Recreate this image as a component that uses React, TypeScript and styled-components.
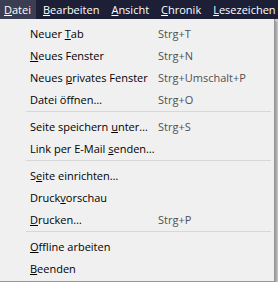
import styled, { createGlobalStyle } from 'styled-components'

const GlobalStyle = createGlobalStyle`
  html, body {
    margin: 0;
    padding: 0;
    background: #d8d8d8;
  }
  body {
    font-family: 'Open Sans', 'Noto Sans', sans-serif;
  }
`

type Entry =
  | { kind: 'item'; label: string; key: number; shortcut?: string }
  | { kind: 'sep' }

const topItems = [
  { label: 'Datei', active: true },
  { label: 'Bearbeiten' },
  { label: 'Ansicht' },
  { label: 'Chronik' },
  { label: 'Lesezeichen' },
]

// key = index of the underlined access letter
const entries: Entry[] = [
  { kind: 'item', label: 'Neuer Tab', key: 6, shortcut: 'Strg+T' },
  { kind: 'item', label: 'Neues Fenster', key: 0, shortcut: 'Strg+N' },
  { kind: 'item', label: 'Neues privates Fenster', key: 6, shortcut: 'Strg+Umschalt+P' },
  { kind: 'item', label: 'Datei öffnen…', key: 8, shortcut: 'Strg+O' },
  { kind: 'sep' },
  { kind: 'item', label: 'Seite speichern unter…', key: 16, shortcut: 'Strg+S' },
  { kind: 'item', label: 'Link per E-Mail senden…', key: 16 },
  { kind: 'sep' },
  { kind: 'item', label: 'Seite einrichten…', key: 1 },
  { kind: 'item', label: 'Druckvorschau', key: 5 },
  { kind: 'item', label: 'Drucken…', key: 0, shortcut: 'Strg+P' },
  { kind: 'sep' },
  { kind: 'item', label: 'Offline arbeiten', key: 0 },
  { kind: 'item', label: 'Beenden', key: 0 },
]

const Access = ({ text, at }: { text: string; at: number }) => (
  <>
    {text.slice(0, at)}
    <u>{text.charAt(at)}</u>
    {text.slice(at + 1)}
  </>
)

const App = () => {
  return (
    <>
      <GlobalStyle />
      <Screen>
        <MenuBar>
          {topItems.map((t) => (
            <TopItem key={t.label} $active={!!t.active}>
              <Access text={t.label} at={0} />
            </TopItem>
          ))}
        </MenuBar>
        <Dropdown>
          {entries.map((e, i) =>
            e.kind === 'sep' ? (
              <Separator key={i} />
            ) : (
              <Row key={i}>
                <Label>
                  <Access text={e.label} at={e.key} />
                </Label>
                {e.shortcut && <Shortcut>{e.shortcut}</Shortcut>}
              </Row>
            )
          )}
        </Dropdown>
      </Screen>
    </>
  )
}

const Screen = styled.div`
  width: 278px;
  height: 282px;
  overflow: hidden;
  display: flex;
  flex-direction: column;
  background: #cfd2d6;
`

const MenuBar = styled.div`
  height: 19px;
  flex-shrink: 0;
  display: flex;
  align-items: stretch;
  background: #1d1f36;
  white-space: nowrap;
  overflow: hidden;
`

const TopItem = styled.div<{ $active: boolean }>`
  display: flex;
  align-items: center;
  flex-shrink: 0;
  padding: 0 5px 0 4px;
  margin-right: 3px;
  font-size: 11px;
  color: #ffffff;
  background: ${(p) => (p.$active ? '#3b3d53' : 'transparent')};
`

const Dropdown = styled.div`
  width: 274px;
  flex: 1;
  display: flex;
  flex-direction: column;
  padding: 3px 0 0;
  background: #f0f0f0;
  border-right: 1px solid #979797;
  border-bottom: 1px solid #979797;
  box-shadow: 2px 2px 2px rgba(0, 0, 0, 0.25);
`

const Row = styled.div`
  height: 22px;
  display: flex;
  align-items: center;
  padding-left: 30px;
  font-size: 11px;
  color: #000000;
  white-space: nowrap;
`

const Label = styled.span`
  width: 128px;
`

const Shortcut = styled.span`
  color: #505050;
`

const Separator = styled.div`
  height: 1px;
  margin: 1px 3px 3px 26px;
  background: #d7d7d7;
`

export default App
